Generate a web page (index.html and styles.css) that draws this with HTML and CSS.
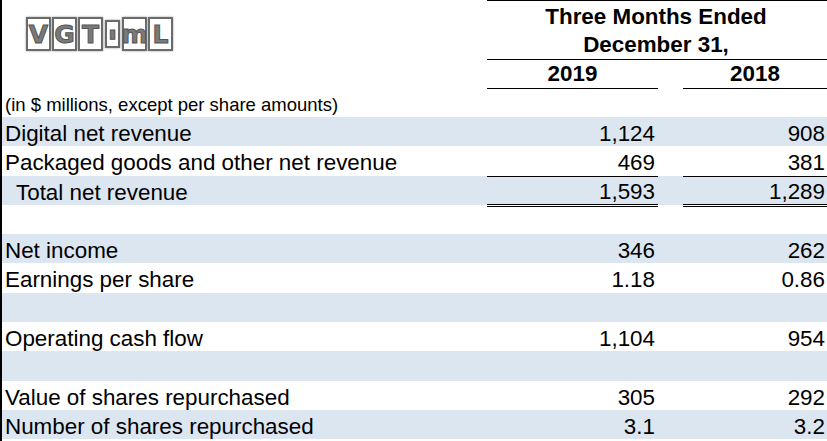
FILE: index.html
```html
<!DOCTYPE html>
<html>
<head>
<meta charset="utf-8">
<link rel="stylesheet" href="styles.css">
</head>
<body>
<div class="page">
  <div class="head">
    <div class="logo-cell">
      <div class="logo">
        <span class="tile">V</span><span class="tile">G</span><span class="tile">T</span><span class="tile small">▮</span><span class="tile">m</span><span class="tile">L</span>
      </div>
    </div>
    <div class="title">Three Months Ended<br>December 31,</div>
    <div class="year y1">2019</div>
    <div class="year y2">2018</div>
  </div>
  <div class="units">(in $ millions, except per share amounts)</div>
  <div class="table">
    <div class="row blue"><div class="label">Digital net revenue</div><div class="num c1">1,124</div><div class="num c2">908</div></div>
    <div class="row"><div class="label">Packaged goods and other net revenue</div><div class="num c1">469</div><div class="num c2">381</div></div>
    <div class="row blue total"><div class="label indent">Total net revenue</div><div class="num c1">1,593</div><div class="num c2">1,289</div></div>
    <div class="row"><div class="label"></div></div>
    <div class="row blue"><div class="label">Net income</div><div class="num c1">346</div><div class="num c2">262</div></div>
    <div class="row"><div class="label">Earnings per share</div><div class="num c1">1.18</div><div class="num c2">0.86</div></div>
    <div class="row blue"><div class="label"></div></div>
    <div class="row"><div class="label">Operating cash flow</div><div class="num c1">1,104</div><div class="num c2">954</div></div>
    <div class="row blue"><div class="label"></div></div>
    <div class="row"><div class="label">Value of shares repurchased</div><div class="num c1">305</div><div class="num c2">292</div></div>
    <div class="row blue"><div class="label">Number of shares repurchased</div><div class="num c1">3.1</div><div class="num c2">3.2</div></div>
  </div>
</div>
</body>
</html>
```
FILE: styles.css
```css
html, body {
  margin: 0;
  padding: 0;
  background: #fff;
}
body {
  font-family: "Liberation Sans", Arial, sans-serif;
  color: #000;
}
.page {
  width: 825px;
  height: 441px;
  border-left: 2px solid #000;
  overflow: hidden;
}
.head {
  display: grid;
  grid-template-columns: 485px 171px 25px 144px;
  grid-template-rows: 60px 29px;
}
.logo-cell {
  grid-column: 1;
  grid-row: 1 / 3;
  padding: 17px 0 0 24px;
}
.logo {
  display: flex;
  align-items: center;
  gap: 1px;
}
.tile {
  display: flex;
  align-items: center;
  justify-content: center;
  width: 21px;
  height: 30px;
  border: 2px solid #6b6b6b;
  box-shadow: 0 0 2px #999;
  background: #fff;
  font-family: "DejaVu Sans", sans-serif;
  font-weight: bold;
  font-size: 25px;
  color: #7a7a7a;
  -webkit-text-stroke: 1px #555;
  line-height: 1;
}
.tile.small {
  width: 11px;
  height: 24px;
  font-size: 12px;
  margin: 0 1px;
}
.title {
  grid-column: 2 / 5;
  grid-row: 1;
  border-top: 1px solid #000;
  border-bottom: 1px solid #000;
  text-align: center;
  font-weight: bold;
  font-size: 22.4px;
  line-height: 28px;
  padding-top: 2px;
  box-sizing: border-box;
  padding-right: 2px;
}
.year {
  grid-row: 2;
  font-weight: bold;
  font-size: 22.4px;
  line-height: 28px;
  text-align: center;
  border-bottom: 1px solid #000;
}
.y1 { grid-column: 2; }
.y2 { grid-column: 4; }
.units {
  height: 28px;
  font-size: 18.5px;
  line-height: 32px;
  padding-left: 3px;
}
.table {
  display: flex;
  flex-direction: column;
}
.row {
  display: grid;
  grid-template-columns: 485px 171px 25px 144px;
  height: 29.3px;
  font-size: 22.4px;
  line-height: 29px;
}
.row.blue {
  background: #dce6f1;
}
.label {
  padding-left: 3px;
  padding-top: 2px;
  white-space: nowrap;
}
.label.indent {
  padding-left: 14px;
}
.num {
  text-align: right;
  padding-top: 2px;
}
.c1 {
  grid-column: 2;
  padding-right: 3px;
}
.c2 {
  grid-column: 4;
  padding-right: 2px;
}
.total .num {
  border-top: 1px solid #000;
  border-bottom: 3px double #000;
  box-sizing: border-box;
  line-height: 25px;
  padding-top: 2px;
}
```
